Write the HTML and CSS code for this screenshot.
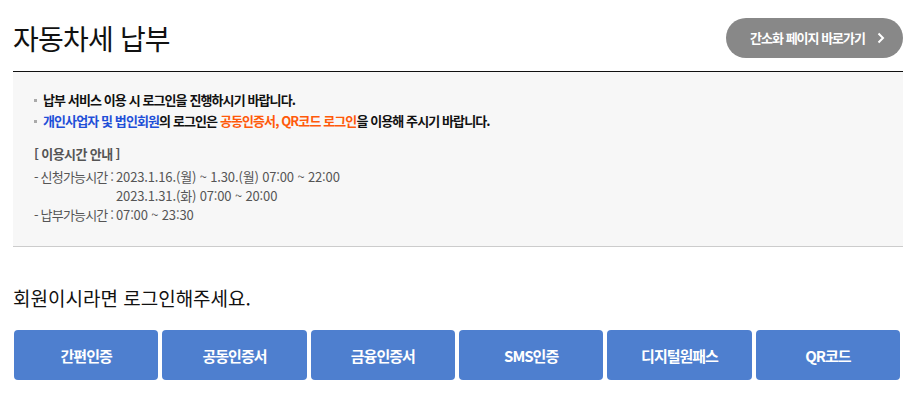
FILE: index.html
```html
<!DOCTYPE html>
<html lang="ko">
<head>
<meta charset="utf-8">
<link rel="stylesheet" href="styles.css">
</head>
<body>
<div class="page">
  <div class="head">
    <h1 class="title">자동차세 납부</h1>
    <a class="simple-btn" href="#">간소화 페이지 바로가기
      <svg class="chev" width="8" height="12" viewBox="0 0 8 12"><path d="M1.5 1.5 L6 6 L1.5 10.5" fill="none" stroke="#fff" stroke-width="2"/></svg>
    </a>
  </div>
  <div class="notice">
    <ul class="bullets">
      <li>납부 서비스 이용 시 로그인을 진행하시기 바랍니다.</li>
      <li><span class="blue">개인사업자 및 법인회원</span>의 로그인은 <span class="orange">공동인증서, QR코드 로그인</span>을 이용해 주시기 바랍니다.</li>
    </ul>
    <p class="time-title">[ 이용시간 안내 ]</p>
    <dl class="times">
      <div class="row"><dt>- 신청가능시간 :</dt><dd>2023.1.16.(월) ~ 1.30.(월) 07:00 ~ 22:00<br>2023.1.31.(화) 07:00 ~ 20:00</dd></div>
      <div class="row"><dt>- 납부가능시간 :</dt><dd>07:00 ~ 23:30</dd></div>
    </dl>
  </div>
  <p class="login-msg">회원이시라면 로그인해주세요.</p>
  <div class="methods">
    <a class="method" href="#">간편인증</a>
    <a class="method" href="#">공동인증서</a>
    <a class="method" href="#">금융인증서</a>
    <a class="method" href="#">SMS인증</a>
    <a class="method" href="#">디지털원패스</a>
    <a class="method" href="#">QR코드</a>
  </div>
</div>
</body>
</html>
```
FILE: styles.css
```css
* { box-sizing: border-box; }
html, body { margin: 0; padding: 0; background: #fff; }
body { font-family: "Noto Sans CJK KR", "Noto Sans", sans-serif; color: #111; }
.page { padding: 0 10px 0 13px; width: 913px; }
.head { display: flex; justify-content: space-between; align-items: center; height: 71px; padding-top: 4px; }
.title { margin: 0; font-size: 28px; font-weight: 400; letter-spacing: -0.8px; color: #111; }
.simple-btn { display: flex; align-items: center; gap: 12px; height: 40px; padding: 0 18px 0 24px; border-radius: 20px; background: #888; color: #fff; font-size: 13px; font-weight: 700; letter-spacing: -1px; text-decoration: none; }
.chev { display: block; margin-top: 1px; }
.notice { border-top: 1px solid #111; border-bottom: 1px solid #ccc; background: #f7f7f7; padding: 17px 21px 19px; height: 176px; }
.bullets { list-style: none; margin: 0; padding: 0; }
.bullets li { position: relative; padding-left: 9px; font-size: 13px; font-weight: 700; letter-spacing: -0.9px; line-height: 21px; color: #111; }
.bullets li::before { content: ""; position: absolute; left: 0; top: 10px; width: 3px; height: 3px; background: #aaa; }
.blue { color: #1f4fd8; }
.orange { color: #ff5a0a; }
.time-title { margin: 12px 0 0; font-size: 13px; font-weight: 700; color: #555; letter-spacing: -0.6px; line-height: 22px; }
.times { margin: 2px 0 0; font-size: 13px; color: #555; letter-spacing: -0.8px; line-height: 19px; }
.times .row { display: flex; }
.times dt { margin: 0; width: 82px; }
.times dd { margin: 0; letter-spacing: -0.15px; }
.login-msg { margin: 38px 0 0; font-size: 19px; line-height: 26px; letter-spacing: 0; color: #111; }
.methods { display: grid; grid-template-columns: repeat(6, 1fr); gap: 4px; margin: 19px 3px 0 1px; }
.method { display: flex; align-items: center; justify-content: center; height: 50px; background: #4e7fcf; border-radius: 4px; color: #fff; font-size: 15px; font-weight: 700; letter-spacing: -1px; text-decoration: none; }
```
